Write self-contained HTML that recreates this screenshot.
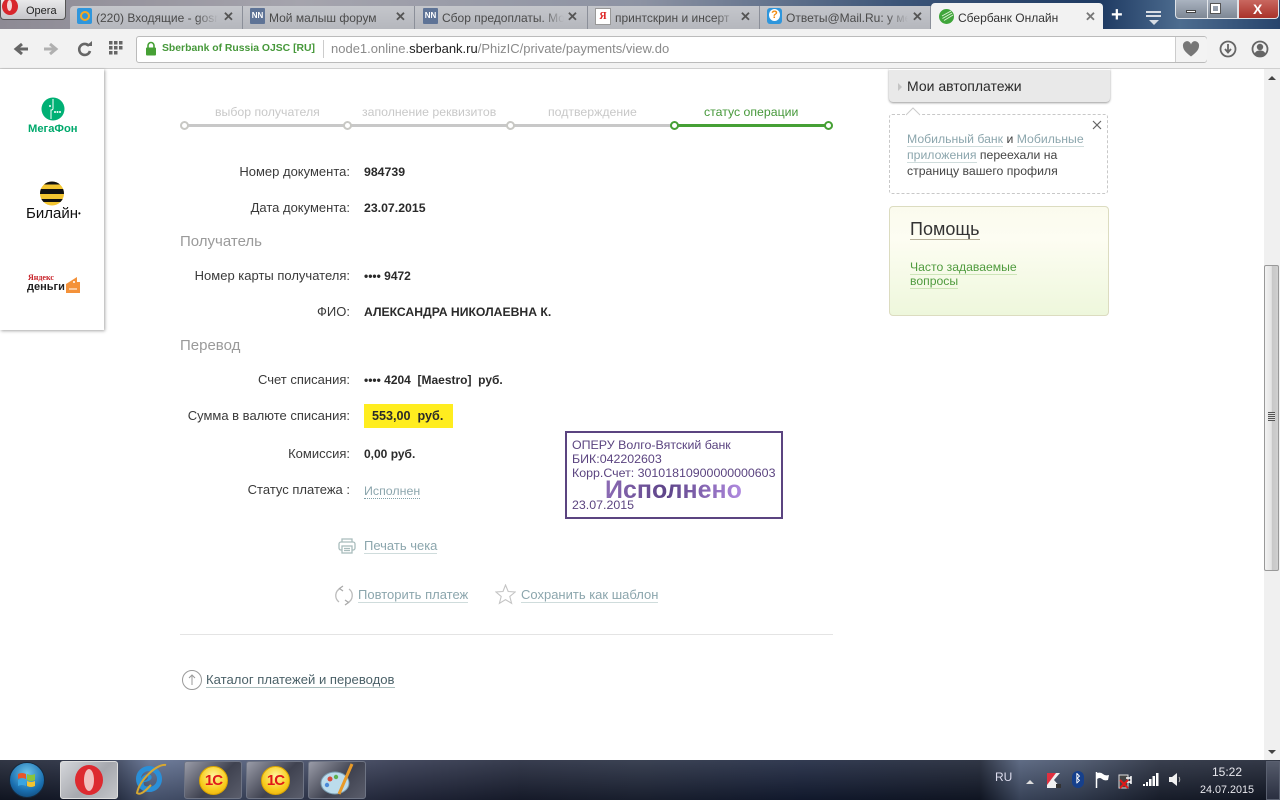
<!DOCTYPE html>
<html><head><meta charset="utf-8"><style>
html,body{margin:0;padding:0;width:1280px;height:800px;overflow:hidden;background:#fff;font-family:"Liberation Sans",sans-serif;font-size:12px;color:#333}
div,span,svg,a{position:absolute}
.t{white-space:nowrap;line-height:16px}
.t span,.t a,.l span{position:static}
.lb{right:930px;text-align:right;white-space:nowrap;line-height:16px;color:#3a3a3a;font-size:13px}
.v{left:364px;font-weight:bold;white-space:nowrap;line-height:16px;color:#2a2a2a;font-size:12.100px}
.tab{top:6px;height:23px;background:linear-gradient(#c4c6cb,#b5b7bd);border-right:1px solid #8b8f99}
.tt{top:10px;font-size:12px;line-height:16px;color:#4a4a4a;white-space:nowrap;overflow:hidden}
.f{-webkit-mask-image:linear-gradient(90deg,#000 82%,transparent);mask-image:linear-gradient(90deg,#000 82%,transparent)}
.x{top:9px;font-size:13px;line-height:16px;font-weight:bold;color:#555}
.st{top:104px;font-size:12.300px;line-height:16px;color:#c8c8c8;white-space:nowrap}
.c{top:121px;width:5px;height:5px;border:2px solid #c8c8c4;border-radius:50%;background:#fff}
.g{border-color:#46a035}
.lnk{white-space:nowrap;line-height:15px;color:#8ca6ad;border-bottom:1px solid #cfdcdc;font-size:13px}
.btn{top:761px;height:38px;width:58px;border:1px solid #6e7484;box-sizing:border-box;border-radius:3px;background:linear-gradient(135deg,#9a9ca8,#3f4250 55%,#5a5d6b)}
.cc{width:27px;height:27px;border-radius:50%;background:radial-gradient(circle at 50% 35%,#fff6a0,#f8cc1c 60%,#e8a810);border:1px solid #d9a400;color:#e01818;font:bold 15px/27px "Liberation Sans",sans-serif;text-align:center;letter-spacing:-1px}
</style></head><body>

<!-- title bar -->
<div style="left:0;top:0;width:1280px;height:29px;background:linear-gradient(90deg,#8d8a94 0,#a5a4ad 300px,#8d93a3 640px,#3c5578 900px,#1e3a62 1100px,#4d6c8f 1180px,#27446c 1280px)"></div>
<div style="left:0;top:0;width:66px;height:20px;background:linear-gradient(#e9e9ea,#c6c6ca);border:1px solid #555;border-top:0;border-radius:0 0 4px 4px;box-sizing:border-box"></div>
<div style="left:2px;top:-2px;width:16px;height:17px;border-radius:50%;background:#d8262c"></div>
<div style="left:7px;top:0;width:5px;height:11px;border-radius:50%;background:#f2d4d4"></div>
<div class="t" style="left:26px;top:3px;font-size:11px;color:#222">Opera</div>

<div class="tab" style="left:70px;width:172px;border-radius:4px 0 0 0"></div>
<div class="tab" style="left:243px;width:171px"></div>
<div class="tab" style="left:415px;width:172px"></div>
<div class="tab" style="left:588px;width:171px"></div>
<div class="tab" style="left:760px;width:170px"></div>
<div style="left:931px;top:3px;width:172px;height:26px;background:#f2f2f2;border-radius:4px 4px 0 0"></div>

<div style="left:77px;top:8px;width:15px;height:16px;background:#2f96dc;border-radius:2px"></div>
<div style="left:80px;top:11px;width:6px;height:6px;border:2px solid #f6a821;border-radius:50%"></div>
<div class="tt f" style="left:96px;width:122px">(220) Входящие - gosr</div>
<div class="x" style="left:223px">✕</div>
<div style="left:250px;top:8px;width:15px;height:16px;background:#5e7396;border-radius:1px;color:#fff;font:bold 8px/16px 'Liberation Sans',sans-serif;text-align:center">NN</div>
<div class="tt" style="left:269px;width:125px">Мой малыш форум</div>
<div class="x" style="left:395px">✕</div>
<div style="left:423px;top:8px;width:15px;height:16px;background:#5e7396;border-radius:1px;color:#fff;font:bold 8px/16px 'Liberation Sans',sans-serif;text-align:center">NN</div>
<div class="tt f" style="left:442px;width:122px">Сбор предоплаты. Мо</div>
<div class="x" style="left:567px">✕</div>
<div style="left:595px;top:8px;width:14px;height:15px;background:#fff;border:1px solid #999;color:#d22;font:bold 10px/15px 'Liberation Serif',serif;text-align:center">Я</div>
<div class="tt f" style="left:615px;width:122px">принтскрин и инсерт</div>
<div class="x" style="left:740px">✕</div>
<div style="left:767px;top:8px;width:15px;height:16px;background:#2f96dc;border-radius:3px"></div>
<div style="left:769px;top:9px;width:11px;height:12px;background:#fff;border-radius:50%;color:#f08a10;font:bold 11px/12px 'Liberation Sans',sans-serif;text-align:center">?</div>
<div class="tt f" style="left:786px;width:122px">Ответы@Mail.Ru: у ме</div>
<div class="x" style="left:912px">✕</div>
<svg style="left:939px;top:9px" width="15" height="15"><circle cx="7.500" cy="7.500" r="7.500" fill="#3fa53a"/><path d="M3 7L12 2M3.500 9.500L13 4M5 11.500L14 6" stroke="#dff2d8" stroke-width="1"/></svg>
<div class="tt" style="left:958px;color:#333">Сбербанк Онлайн</div>
<div class="x" style="left:1085px;color:#777">✕</div>
<div class="t" style="left:1111px;top:7px;color:#fff;font-size:20px;font-weight:bold">+</div>
<div style="left:1146px;top:11px;width:15px;height:2px;background:#d8dde4"></div>
<div style="left:1146px;top:15px;width:15px;height:2px;background:#d8dde4"></div>
<div style="left:1149px;top:20px;width:0;height:0;border:5px solid transparent;border-top:5px solid #d8dde4;border-bottom:0"></div>
<!-- window controls -->
<div style="left:1175px;top:0;width:63px;height:19px;background:linear-gradient(#aab3c0,#7d8794);border:1px solid #dfe3e8;border-top:0;box-sizing:border-box;border-radius:0 0 0 4px"></div>
<div style="left:1207px;top:0;width:1px;height:18px;background:#e4e7eb"></div>
<div style="left:1238px;top:0;width:41px;height:19px;background:linear-gradient(#c9675f,#a9322a);border:1px solid #dfe3e8;border-top:0;box-sizing:border-box;border-radius:0 0 4px 0"></div>
<div style="left:1186px;top:10px;width:10px;height:3px;background:#fff;border:1px solid #444;box-sizing:border-box"></div>
<div style="left:1211px;top:4px;width:9px;height:9px;border:2px solid #fff;outline:1px solid #555;box-sizing:border-box"></div>
<div class="t" style="left:1253px;top:1px;color:#fff;font-weight:bold;font-size:14px">X</div>

<!-- toolbar -->
<div style="left:0;top:29px;width:1280px;height:40px;background:#f2f2f2;border-bottom:1px solid #cfcfcf;box-sizing:border-box"></div>
<svg style="left:12px;top:40px" width="60" height="18"><path d="M16 9H5M10 4L4 9l6 5" fill="none" stroke="#666" stroke-width="3"/><path d="M32 9h11M38 4l6 5-6 5" fill="none" stroke="#b0b0b0" stroke-width="3"/></svg>
<svg style="left:76px;top:40px" width="18" height="18"><path d="M13 6A5.500 5.500 0 1 0 14 11" fill="none" stroke="#666" stroke-width="2.600"/><path d="M10 6h6V1z" fill="#666"/></svg>
<svg style="left:109px;top:41px" width="14" height="14" fill="#666"><rect width="3.500" height="3.500"/><rect x="5" width="3.500" height="3.500"/><rect x="10" width="3.500" height="3.500"/><rect y="5" width="3.500" height="3.500"/><rect x="5" y="5" width="3.500" height="3.500"/><rect x="10" y="5" width="3.500" height="3.500"/><rect y="10" width="3.500" height="3.500"/><rect x="5" y="10" width="3.500" height="3.500"/></svg>
<div style="left:136px;top:36px;width:1071px;height:27px;background:#fff;border:1px solid #bbb;border-radius:3px;box-sizing:border-box"></div>
<div style="left:1175px;top:37px;width:31px;height:25px;background:#f3f3f3;border-left:1px solid #ccc;border-radius:0 3px 3px 0"></div>
<svg style="left:145px;top:41px" width="12" height="15"><path d="M3 7V4.500a3 3 0 0 1 6 0V7" fill="none" stroke="#46a035" stroke-width="1.600"/><rect x="1" y="6.500" width="10" height="8" rx="1" fill="#46a035"/></svg>
<div class="t" style="left:162px;top:41px;font-size:10.400px;font-weight:bold;color:#46983a">Sberbank of Russia OJSC [RU]</div>
<div style="left:323px;top:40px;width:1px;height:18px;background:#ccc"></div>
<div class="t" style="left:331px;top:41px;font-size:13px;color:#8a8a8a">node1.online.<span style="color:#222">sberbank.ru</span>/PhizIC/private/payments/view.do</div>
<svg style="left:1182px;top:41px" width="18" height="16"><path d="M9 15.500C3 11 1 8 1 5a4 4 0 0 1 8-1.500A4 4 0 0 1 17 5c0 3-2 6-8 10.500z" fill="#777"/></svg>
<svg style="left:1219px;top:39px" width="18" height="20"><circle cx="9" cy="10" r="7.500" fill="#f2f2f2" stroke="#666" stroke-width="1.800"/><path d="M9 5v8M6 10l3 3.500L12 10" fill="none" stroke="#666" stroke-width="1.800"/></svg>
<svg style="left:1251px;top:39px" width="18" height="20"><circle cx="9" cy="10" r="7.500" fill="#f2f2f2" stroke="#666" stroke-width="1.800"/><circle cx="9" cy="8" r="3.200" fill="#666"/><path d="M3.500 15c1-3 3-3.500 5.500-3.500s4.500.5 5.500 3.500a8 8 0 0 1-11 0z" fill="#666"/></svg>

<!-- left panel -->
<div style="left:0;top:69px;width:104px;height:261px;background:#fff;box-shadow:1px 1px 3px rgba(0,0,0,.35)"></div>
<svg style="left:41px;top:97px" width="24" height="24"><circle cx="12" cy="12" r="11.500" fill="#00b074"/><path d="M12 2v9.500q0 1.500-2 1.500v9" fill="none" stroke="#fff" stroke-width="1"/><circle cx="9" cy="9" r="1" fill="#fff"/><circle cx="14" cy="15" r="1" fill="#fff"/><circle cx="16.500" cy="15" r="1" fill="#fff"/><circle cx="19" cy="15" r="1" fill="#fff"/></svg>
<div class="t" style="left:28px;top:121px;font-size:11.200px;font-weight:bold;color:#00a96c">МегаФон</div>
<svg style="left:39px;top:181px" width="26" height="25"><defs><clipPath id="b"><circle cx="13" cy="12.500" r="12"/></clipPath></defs><circle cx="13" cy="12.500" r="12" fill="#f3c531"/><g clip-path="url(#b)" fill="#111"><rect y="0" width="26" height="3.500"/><rect y="8" width="26" height="5"/><rect y="18" width="26" height="3"/></g></svg>
<div class="t" style="left:26px;top:206px;font-size:15px;color:#111">Билайн<span style="font-size:8px;vertical-align:2px">•</span></div>
<div class="t" style="left:28px;top:270px;font-size:8px;font-weight:bold;color:#c8232a;font-family:'Liberation Serif',serif">Яндекс</div>
<div class="t" style="left:27px;top:279px;font-size:11px;font-weight:bold;color:#222">деньги</div>
<svg style="left:66px;top:277px" width="15" height="17"><path d="M0 7L11 0v5h3v11H0z" fill="#f4923a"/><path d="M3 12h8" stroke="#fff" stroke-width="1"/><circle cx="8" cy="5" r="1" fill="#fff"/></svg>

<!-- steps -->
<div class="st" style="left:215px">выбор получателя</div>
<div class="st" style="left:362px">заполнение реквизитов</div>
<div class="st" style="left:548px">подтверждение</div>
<div class="st" style="left:704px;color:#46983a">статус операции</div>
<div style="left:184px;top:124px;width:490px;height:3px;background:#c8c8c8"></div>
<div style="left:674px;top:124px;width:154px;height:3px;background:#46a035"></div>
<div class="c" style="left:180px"></div>
<div class="c" style="left:343px"></div>
<div class="c" style="left:506px"></div>
<div class="c g" style="left:670px"></div>
<div class="c g" style="left:824px"></div>

<!-- form -->
<div class="lb" style="top:164px">Номер документа:</div><div class="v" style="top:164px;font-size:12.300px">984739</div>
<div class="lb" style="top:200px">Дата документа:</div><div class="v" style="top:200px;font-size:12.300px">23.07.2015</div>
<div class="t" style="left:180px;top:234px;font-size:15px;color:#9a9a9a">Получатель</div>
<div class="lb" style="top:268px">Номер карты получателя:</div><div class="v" style="top:268px;font-size:12px">•••• 9472</div>
<div class="lb" style="top:304px">ФИО:</div><div class="v" style="top:304px;font-size:12.200px">АЛЕКСАНДРА НИКОЛАЕВНА К.</div>
<div class="t" style="left:180px;top:338px;font-size:15px;color:#9a9a9a">Перевод</div>
<div class="lb" style="top:372px">Счет списания:</div><div class="v" style="top:372px;white-space:pre;font-size:12px">•••• 4204  [Maestro]  руб.</div>
<div class="lb" style="top:408px">Сумма в валюте списания:</div>
<div style="left:364px;top:404px;width:89px;height:24px;background:#ffed1f"></div>
<div class="v" style="left:372px;top:408px;white-space:pre;font-size:12.600px">553,00  руб.</div>
<div class="lb" style="top:446px">Комиссия:</div><div class="v" style="top:446px;font-size:12px">0,00 руб.</div>
<div class="lb" style="top:482px">Статус платежа :</div>
<div class="t" style="left:364px;top:484px;color:#8ca6ad;border-bottom:1px dotted #7fa0a8;line-height:14px;font-size:12.400px">Исполнен</div>

<!-- stamp -->
<div style="left:565px;top:431px;width:218px;height:88px;border:2px solid #5b4480;box-sizing:border-box;background:#fff"></div>
<div class="t" style="left:572px;top:438px;color:#5b4480;line-height:14px;font-size:12.400px">ОПЕРУ Волго-Вятский банк<br>БИК:042202603<br>Корр.Счет: 30101810900000000603</div>
<div class="t" style="left:572px;top:498px;color:#5b4480;line-height:14px;font-size:12.400px">23.07.2015</div>
<div class="t" style="left:605px;top:478px;font-size:25px;line-height:24px;font-weight:bold;background:linear-gradient(90deg,#8c6bb5,#5d4488 45%,#b08ae0);-webkit-background-clip:text;background-clip:text;color:transparent">Исполнено</div>

<!-- actions -->
<svg style="left:338px;top:537px" width="18" height="18" fill="none" stroke="#a9bcbc" stroke-width="1.300"><rect x="1" y="5" width="16" height="8" rx="2"/><path d="M4 5V2h10v3"/><rect x="4" y="9" width="10" height="7" fill="#fff"/><path d="M6 11.500h6M6 13.500h6"/></svg>
<div class="lnk" style="left:364px;top:538px">Печать чека</div>
<svg style="left:334px;top:585px" width="20" height="21" fill="none" stroke="#bbb" stroke-width="1.300"><path d="M6 3.500a8 8 0 0 0-1 13.500M14 17.500a8 8 0 0 0 1-13.500"/><path d="M9 1L5.500 3.500 9 6M11 20l3.500-2.500L11 15" stroke="#aaa"/></svg>
<div class="lnk" style="left:358px;top:587px">Повторить платеж</div>
<svg style="left:495px;top:584px" width="21" height="21"><path d="M10.500 1l2.700 6.500 7 .5-5.400 4.500 1.800 6.800-6.100-3.700-6.100 3.700 1.800-6.800L1 8l7-.5z" fill="none" stroke="#c4c4c4" stroke-width="1.100"/></svg>
<div class="lnk" style="left:521px;top:587px">Сохранить как шаблон</div>
<div style="left:180px;top:634px;width:653px;height:1px;background:#e4e4e4"></div>
<svg style="left:181px;top:669px" width="22" height="22" fill="none" stroke="#9a9a9a" stroke-width="1"><circle cx="11" cy="11" r="9.500"/><path d="M11 16V6M8 9l3-3 3 3"/></svg>
<div class="t" style="left:206px;top:672px;font-size:13.100px;line-height:15px;color:#4b6168;border-bottom:1px solid #a9bcbc">Каталог платежей и переводов</div>

<!-- right column -->
<div style="left:889px;top:69px;width:221px;height:33px;background:#e9e9e9;border-top:1px solid #fff;box-sizing:border-box;border-radius:0 0 4px 4px;box-shadow:0 1px 2px rgba(0,0,0,.4)"></div>
<div style="left:898px;top:83px;width:0;height:0;border:4px solid transparent;border-left:4px solid #c4c4c4;border-right:0"></div>
<div class="t" style="left:907px;top:78px;font-size:14px;color:#2a2a2a">Мои автоплатежи</div>
<div style="left:889px;top:114px;width:219px;height:80px;border:1px dashed #c8c8c8;box-sizing:border-box;border-radius:3px"></div>
<svg style="left:906px;top:107px" width="14" height="9"><path d="M0 8L7 1l7 7" fill="#fff" stroke="#ccc"/><path d="M1 8.500h12" stroke="#fff" stroke-width="2"/></svg>
<svg style="left:1092px;top:120px" width="10" height="10"><path d="M1 1l8 8M9 1L1 9" stroke="#666" stroke-width="1.200"/></svg>
<div class="l" style="left:907px;top:131px;width:195px;line-height:16px;color:#444;white-space:nowrap;font-size:12.250px"><span style="color:#8ca6ad;border-bottom:1px solid #cfdcdc">Мобильный банк</span> и <span style="color:#8ca6ad;border-bottom:1px solid #cfdcdc">Мобильные</span><br><span style="color:#8ca6ad;border-bottom:1px solid #cfdcdc">приложения</span> переехали на<br>страницу вашего профиля</div>
<div style="left:889px;top:206px;width:220px;height:110px;border:1px solid #dcdcc0;box-sizing:border-box;border-radius:4px;background:linear-gradient(#fbfbee,#fdfdf2 30%,#eef7dc)"></div>
<div class="t" style="left:910px;top:219px;font-size:18px;line-height:20px;color:#333;border-bottom:1px solid #b5b09a">Помощь</div>
<div class="t" style="left:910px;top:260px;line-height:14px;color:#4f9b3e;border-bottom:1px solid #cde5b8;font-size:12.200px">Часто задаваемые</div>
<div class="t" style="left:910px;top:274px;line-height:14px;color:#4f9b3e;border-bottom:1px solid #cde5b8;font-size:12.200px">вопросы</div>

<!-- scrollbar -->
<div style="left:1264px;top:69px;width:16px;height:691px;background:#f0f0f0"></div>
<div style="left:1268px;top:76px;width:0;height:0;border:4px solid transparent;border-bottom:4px solid #444;border-top:0"></div>
<div style="left:1268px;top:750px;width:0;height:0;border:4px solid transparent;border-top:4px solid #444;border-bottom:0"></div>
<div style="left:1264px;top:265px;width:15px;height:306px;box-sizing:border-box;border:1px solid #999;border-radius:2px;background:linear-gradient(90deg,#f2f2f2,#e4e4e4 50%,#c8c8c8 55%,#d0d0d0)"></div>
<div style="left:1268px;top:412px;width:7px;height:9px;background:repeating-linear-gradient(#555 0,#555 1px,#ddd 1px,#ddd 2px)"></div>

<!-- taskbar -->
<div style="left:0;top:760px;width:1280px;height:40px;background:linear-gradient(90deg,#151b2b 0,#1c2338 100px,#5a6a8c 150px,#3c4560 300px,#2a3048 400px,#1c2236 520px,#20283c 640px,#16203a 800px,#141b2c 980px,#4a5874 1020px,#3c4860 1080px,#1e2536 1160px,#161c2c 1280px)"></div>
<div style="left:0;top:760px;width:1280px;height:40px;background:linear-gradient(rgba(255,255,255,.12),rgba(0,0,0,.25))"></div>
<div style="left:9px;top:762px;width:36px;height:36px;border-radius:50%;background:radial-gradient(circle at 50% 30%,#6cc4ea,#1a6fb0 60%,#0e3b66);border:1px solid #16283c;box-sizing:border-box"></div>
<svg style="left:17px;top:771px" width="20" height="18"><path d="M1 3q4-2 8 0v5q-4-2-8 0z" fill="#e8562a"/><path d="M10 3q4 2 8 0v6q-4 2-8 0z" fill="#8ac43c"/><path d="M1 9q4-2 8 0v6q-4-2-8 0z" fill="#3aa4e0"/><path d="M10 10q4 2 8 0v5q-4 2-8 0z" fill="#f4c430"/></svg>
<div class="btn" style="left:60px;background:linear-gradient(135deg,#d4d6da,#a6a8ae 55%,#c4c6ca);border-color:#ddd"></div>
<div style="left:75px;top:765px;width:28px;height:30px;border-radius:50%;background:#dd2a30"></div>
<div style="left:84px;top:769px;width:10px;height:22px;border-radius:50%;background:#f0c0c0"></div>
<div style="left:136px;top:766px;width:26px;height:26px;border-radius:50%;border:5px solid #2a8fd8;box-sizing:border-box"></div>
<div class="t" style="left:139px;top:764px;font:italic bold 30px/30px 'Liberation Serif',serif;color:#2a8fd8">e</div>
<svg style="left:134px;top:763px" width="34" height="34"><path d="M32 2C24 0 6 16 3 30c4 3 10-4 14-8" fill="none" stroke="#d6a832" stroke-width="2"/></svg>
<div class="btn" style="left:184px"></div><div class="btn" style="left:246px"></div><div class="btn" style="left:308px"></div>
<div class="cc" style="left:199px;top:766px">1С</div>
<div class="cc" style="left:261px;top:766px">1С</div>
<svg style="left:320px;top:763px" width="34" height="34"><ellipse cx="15" cy="20" rx="14" ry="11" fill="#bcdcec" stroke="#7a9cb0"/><circle cx="10" cy="16" r="2.500" fill="#d84a3a"/><circle cx="16" cy="14" r="2.200" fill="#5cb050"/><circle cx="7" cy="22" r="2.200" fill="#4a8ad8"/><path d="M32 1L19 31" stroke="#e89a28" stroke-width="3"/></svg>

<div class="t" style="left:995px;top:769px;color:#dde;font-size:12px">RU</div>
<div style="left:1026px;top:780px;width:0;height:0;border:4px solid transparent;border-bottom:4px solid #ddd;border-top:0"></div>
<svg style="left:1046px;top:771px" width="16" height="18"><path d="M1 2h13L8 9l7 8H1z" fill="#f0f0f0"/><path d="M1 2h9L1 14z" fill="#e03040"/><path d="M10 13h5v4h-5z" fill="#333"/></svg>
<div style="left:1072px;top:771px;width:12px;height:17px;border-radius:6px;background:#16408c;color:#fff;font:bold 11px/17px 'Liberation Sans',sans-serif;text-align:center">ᛒ</div>
<svg style="left:1095px;top:771px" width="16" height="17"><path d="M1.500 1v16" stroke="#fff" stroke-width="1.500"/><path d="M2 2q4-1 6 1t6 1l-1 5q-4 1-6-1t-5 0z" fill="#fff"/></svg>
<svg style="left:1118px;top:771px" width="16" height="18"><rect x="1" y="4" width="9" height="13" fill="#444" stroke="#ddd"/><path d="M8 7h5M8 11h5M13 5v8" stroke="#fff" stroke-width="1.500"/><path d="M2 9l8 8M10 9l-8 8" stroke="#e01818" stroke-width="2"/></svg>
<svg style="left:1143px;top:771px" width="16" height="16" fill="#fff"><rect y="13" width="2" height="2"/><rect x="3" y="11" width="2" height="4"/><rect x="6" y="8" width="2.500" height="7"/><rect x="9.500" y="5" width="2.500" height="10"/><rect x="13" y="2" width="2.500" height="13"/></svg>
<svg style="left:1168px;top:771px" width="14" height="17"><path d="M1 6h3l5-4v13l-5-4H1z" fill="#f0f0f0"/><path d="M11 6q1.500 2.500 0 5" fill="none" stroke="#aaa"/></svg>
<div class="t" style="left:1197px;top:764px;width:60px;text-align:center;color:#e8e8ee;line-height:17px;font-size:10.800px"><span style="font-size:12px">15:22</span><br>24.07.2015</div>
<div style="left:1266px;top:761px;width:14px;height:39px;border:1px solid #5a6070;box-sizing:border-box;background:linear-gradient(#555b6b,#2a2f40)"></div>
</body></html>
